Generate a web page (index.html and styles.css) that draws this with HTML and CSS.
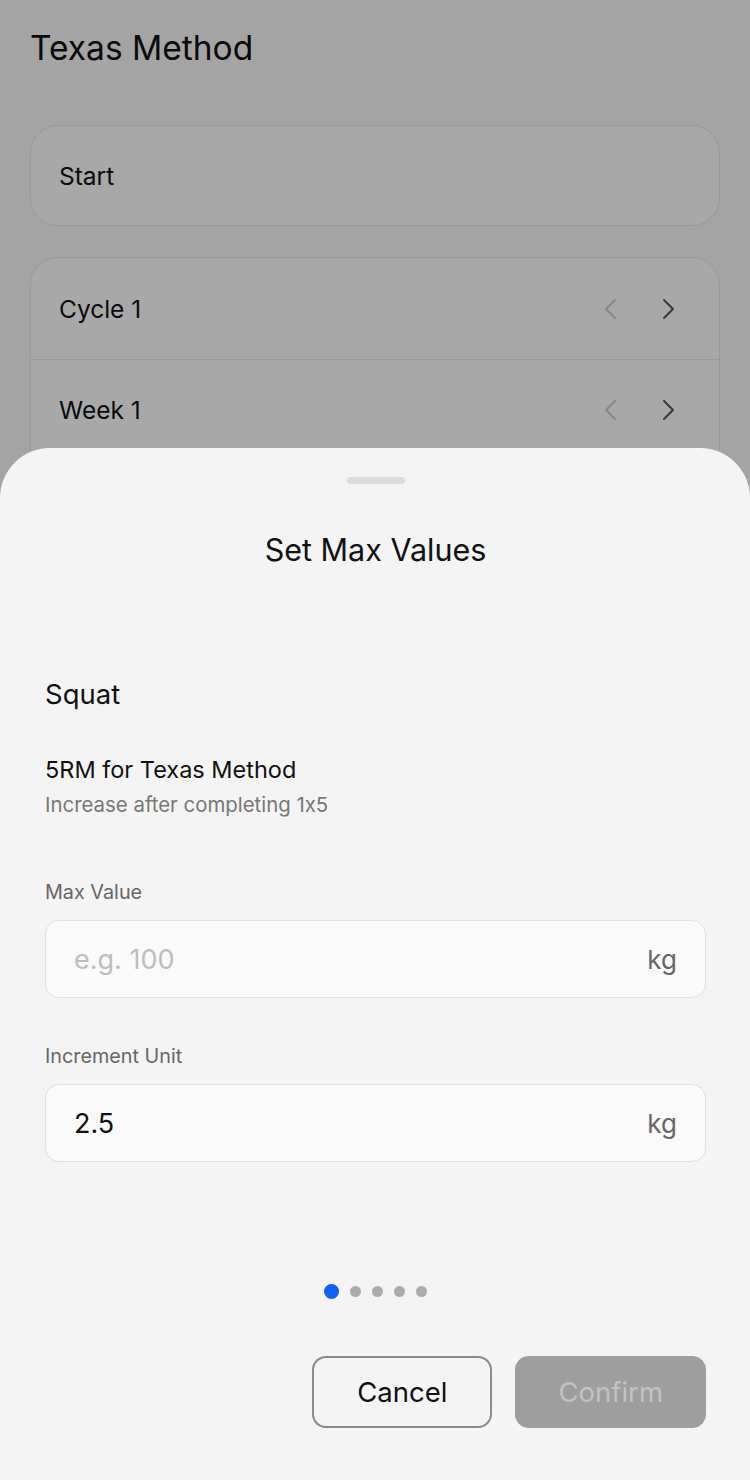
FILE: index.html
```html
<!DOCTYPE html>
<html lang="en">
<head>
    <meta charset="UTF-8">
    <meta name="viewport" content="width=device-width, initial-scale=1.0">
    <title>Texas Method</title>
    <link rel="stylesheet" href="styles.css">
</head>
<body>
    <div class="page">
        <h1 class="page-title">Texas Method</h1>

        <div class="card">
            <div class="row row-single">Start</div>
        </div>

        <div class="card">
            <div class="row">
                <span>Cycle 1</span>
                <div class="stepper">
                    <svg class="chev off" viewBox="0 0 14 22"><path d="M12 2 L3 11 L12 20"/></svg>
                    <svg class="chev" viewBox="0 0 14 22"><path d="M2 2 L11 11 L2 20"/></svg>
                </div>
            </div>
            <div class="row">
                <span>Week 1</span>
                <div class="stepper">
                    <svg class="chev off" viewBox="0 0 14 22"><path d="M12 2 L3 11 L12 20"/></svg>
                    <svg class="chev" viewBox="0 0 14 22"><path d="M2 2 L11 11 L2 20"/></svg>
                </div>
            </div>
            <div class="row">
                <span>Day 1</span>
            </div>
        </div>
    </div>

    <div class="backdrop"></div>

    <div class="sheet">
        <div class="handle"></div>
        <h2 class="sheet-title">Set Max Values</h2>

        <div class="lift">Squat</div>

        <div class="hint">
            <div class="hint-main">5RM for Texas Method</div>
            <div class="hint-sub">Increase after completing 1x5</div>
        </div>

        <div class="field">
            <label class="field-label">Max Value</label>
            <div class="input-box">
                <input type="text" placeholder="e.g. 100">
                <span class="unit">kg</span>
            </div>
        </div>

        <div class="field">
            <label class="field-label">Increment Unit</label>
            <div class="input-box">
                <input type="text" value="2.5">
                <span class="unit">kg</span>
            </div>
        </div>

        <div class="dots">
            <span class="dot active"></span>
            <span class="dot"></span>
            <span class="dot"></span>
            <span class="dot"></span>
            <span class="dot"></span>
        </div>

        <div class="actions">
            <button class="btn btn-outline">Cancel</button>
            <button class="btn btn-disabled" disabled>Confirm</button>
        </div>
    </div>
</body>
</html>
```

FILE: styles.css
```css
* { box-sizing: border-box; }

html, body {
    margin: 0;
    height: 1480px;
    overflow: hidden;
}

body {
    font-family: Inter, "Noto Sans", sans-serif;
    font-feature-settings: "calt" 0;
    background: #f4f4f4;
    color: #111;
}

.page {
    padding: 24px 30px 0;
}

.page-title {
    margin: 0 0 53px;
    font-size: 33.5px;
    font-weight: 400;
    line-height: 48px;
}

.card {
    background: #fafafa;
    border: 1.5px solid #e4e4e4;
    border-radius: 28px;
    margin-bottom: 31px;
    overflow: hidden;
}

.row {
    height: 101px;
    padding: 0 28px;
    display: flex;
    align-items: center;
    justify-content: space-between;
    font-size: 24.5px;
}
.row-single { height: 99px; }
.card .row + .row { border-top: 1.5px solid #e4e4e4; }

.stepper {
    display: flex;
    gap: 45px;
    padding-right: 15px;
}
.chev {
    width: 14px;
    height: 22px;
    fill: none;
    stroke: #555;
    stroke-width: 2;
    stroke-linecap: round;
    stroke-linejoin: round;
}
.chev.off { stroke: #c8c8c8; }

.backdrop {
    position: fixed;
    inset: 0;
    background: rgba(0, 0, 0, 0.324);
}

/* bottom sheet */
.sheet {
    position: fixed;
    left: 0;
    right: 0;
    top: 448px;
    bottom: 0;
    background: #f4f4f4;
    border-radius: 50px 50px 0 0;
    padding: 29px 44px 0 45px;
}

.handle {
    width: 58px;
    height: 7px;
    border-radius: 4px;
    background: #dcdcdc;
    margin: 0 auto;
}

.sheet-title {
    margin: 46px 0 0;
    text-align: center;
    font-size: 30.5px;
    font-weight: 400;
    line-height: 40px;
}

.lift {
    margin-top: 106px;
    font-size: 27.5px;
    line-height: 36px;
}

.hint { margin-top: 42px; }
.hint-main {
    font-size: 23.5px;
    line-height: 32px;
}
.hint-sub {
    margin-top: 5px;
    font-size: 20.4px;
    line-height: 28px;
    color: #777;
}

.field { margin-top: 59px; }
.field + .field { margin-top: 44px; }

.field-label {
    display: block;
    font-size: 19.8px;
    line-height: 28px;
    color: #666;
    margin-bottom: 14px;
}

.input-box {
    height: 78px;
    display: flex;
    align-items: center;
    padding: 0 28px;
    background: #fafafa;
    border: 1.5px solid #e0e0e0;
    border-radius: 14px;
}
.input-box input {
    flex: 1;
    min-width: 0;
    border: none;
    outline: none;
    background: transparent;
    font: inherit;
    font-size: 27px;
    color: #111;
    padding: 0;
}
.input-box input::placeholder { color: #bdbdbd; }
.unit {
    font-size: 26px;
    color: #666;
}

.dots {
    margin-top: 122px;
    display: flex;
    justify-content: center;
    align-items: center;
    gap: 11px;
    height: 15px;
}
.dot {
    width: 11px;
    height: 11px;
    border-radius: 50%;
    background: #ababab;
}
.dot.active {
    width: 15px;
    height: 15px;
    background: #0d62f5;
}

.actions {
    margin-top: 57px;
    display: flex;
    justify-content: flex-end;
    gap: 23px;
}

.btn {
    height: 72px;
    padding: 0 43px;
    border-radius: 14px;
    font-family: inherit;
    font-size: 27.5px;
}
.btn-outline {
    background: transparent;
    border: 2px solid #8a8a8a;
    color: #111;
}
.btn-disabled {
    background: #9e9e9e;
    border: none;
    color: #c2c2c2;
}
```
